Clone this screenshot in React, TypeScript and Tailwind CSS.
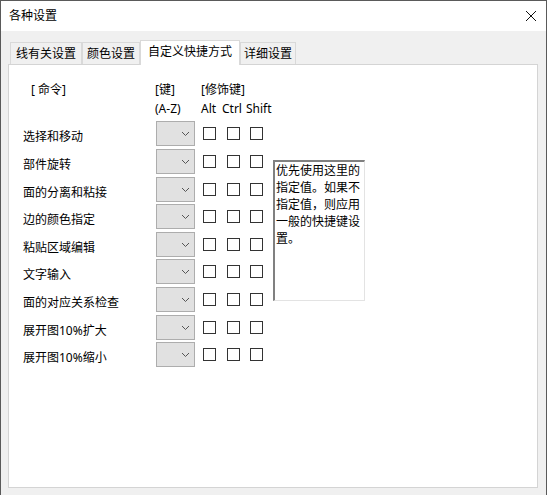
import React from 'react';

const tabs = [
  { label: '线有关设置', active: false, width: 'w-[72px]' },
  { label: '颜色设置', active: false, width: 'w-[58px]' },
  { label: '自定义快捷方式', active: true, width: 'w-[100px]' },
  { label: '详细设置', active: false, width: 'w-[56px]' },
];

const commands = [
  { label: '选择和移动', row: 'h-[28px]' },
  { label: '部件旋转', row: 'h-[28px]' },
  { label: '面的分离和粘接', row: 'h-[27px]' },
  { label: '边的颜色指定', row: 'h-[28px]' },
  { label: '粘贴区域编辑', row: 'h-[27px]' },
  { label: '文字输入', row: 'h-[28px]' },
  { label: '面的对应关系检查', row: 'h-[28px]' },
  { label: '展开图10%扩大', row: 'h-[27px]' },
  { label: '展开图10%缩小', row: 'h-[28px]' },
];

const Check = ({ className = '' }: { className?: string }) => (
  <span className={`block w-[13px] h-[13px] border border-[#333333] bg-white ${className}`} />
);

const Combo = () => (
  <div className="w-[39px] h-[25px] border border-[#adadad] bg-[#e1e1e1] flex items-center justify-end pr-[4px]">
    <svg width="9" height="6" viewBox="0 0 9 6" fill="none" stroke="#555555" strokeWidth="1">
      <path d="M1 1l3.5 3.5L8 1" />
    </svg>
  </div>
);

export default function App() {
  return (
    <div className="w-[547px] h-[495px] flex flex-col bg-[#f0f0f0] border-x border-t border-[#5a5a5a] text-[12px] text-black overflow-hidden font-['Noto_Sans','Noto_Sans_CJK_SC',sans-serif]">
      {/* Title bar */}
      <div className="h-[30px] shrink-0 bg-white flex items-center justify-between px-[8px]">
        <span>各种设置</span>
        <svg width="12" height="12" viewBox="0 0 12 12" fill="none" stroke="#111111" strokeWidth="1" className="mr-[1px]">
          <path d="M1 1l10 10M11 1L1 11" />
        </svg>
      </div>

      <div className="flex-1 flex flex-col pl-[7px] pr-[8px] pb-[7px] pt-[11px] min-h-0">
        {/* Tabs */}
        <div className="flex h-[22px] shrink-0 pl-[2px] items-end relative z-10">
          {tabs.map(tab => (
            <div
              key={tab.label}
              className={
                tab.active
                  ? `${tab.width} h-[25px] pb-[2px] bg-white border border-b-0 border-[#d9d9d9] flex items-center justify-center -mb-px`
                  : `${tab.width} h-[22px] bg-[#f0f0f0] border border-b-0 border-[#d9d9d9] flex items-center justify-center`
              }
            >
              {tab.label}
            </div>
          ))}
        </div>

        {/* Panel */}
        <div className="flex-1 bg-white border border-[#d4d4d4] min-h-0 pl-[14px]">
          <div className="flex h-[56px] pt-[15px] leading-[19px]">
            <div className="w-[132px] pl-[8px]">[ 命令]</div>
            <div className="w-[46px]">
              <div>[键]</div>
              <div>(A-Z)</div>
            </div>
            <div>
              <div>[修饰键]</div>
              <div className="flex">
                <span className="w-[21px]">Alt</span>
                <span className="w-[24px]">Ctrl</span>
                <span>Shift</span>
              </div>
            </div>
          </div>

          <div className="flex">
            <div>
              {commands.map(cmd => (
                <div key={cmd.label} className={`flex ${cmd.row}`}>
                  <div className="w-[133px] pt-[7px] leading-[18px]">{cmd.label}</div>
                  <Combo />
                  <div className="flex gap-[11px] pt-[6px] pl-[8px]">
                    <Check />
                    <Check />
                    <Check className="-ml-px" />
                  </div>
                </div>
              ))}
            </div>
            <div className="ml-[10px] mt-[39px] w-[92px] h-[141px] bg-white border-t-2 border-l-2 border-t-[#808080] border-l-[#808080] border-r border-b border-r-[#e3e3e3] border-b-[#e3e3e3] leading-[17px] pl-[1px]">
              优先使用这里的指定值。如果不指定值，则应用一般的快捷键设置。
            </div>
          </div>
        </div>
      </div>
    </div>
  );
}
